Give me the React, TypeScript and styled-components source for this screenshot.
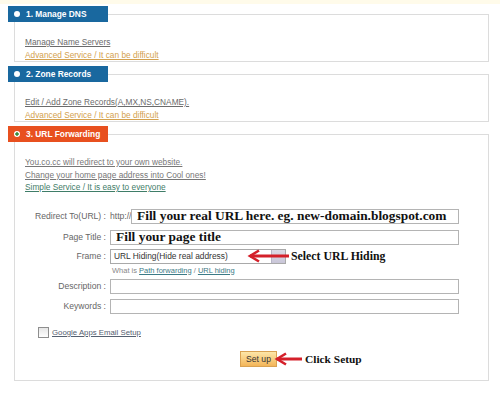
import React from 'react';
import styled, {createGlobalStyle} from 'styled-components';

const GlobalStyle = createGlobalStyle`
  body {
    margin: 0;
    background: #fff;
    font-family: 'Liberation Sans', Arial, sans-serif;
  }
`;

type Tone = 'blue' | 'orange';

const tabColors: Record<Tone, string> = {
  blue: '#19689f',
  orange: '#e8501f',
};

const Arrow = ({width}: {width: number}) => (
  <svg width={width} height={14} viewBox={`0 0 ${width} 14`}>
    <path d={`M3 7 L${width} 7`} stroke="#d4202a" strokeWidth={3} />
    <path d="M12 1.5 L3 7 L12 12.5" fill="none" stroke="#d4202a" strokeWidth={2.6} />
  </svg>
);

const App = () => {
  return (
    <Page>
      <GlobalStyle />
      <TopStrip />

      <Section>
        <Tab $tone="blue">
          <Dot />
          1. Manage DNS
        </Tab>
        <Panel>
          <Line $color="#6b6b6b" $underline>Manage Name Servers</Line>
          <Line $color="#d3a14e" $underline>Advanced Service / It can be difficult</Line>
        </Panel>
      </Section>

      <Section>
        <Tab $tone="blue">
          <Dot />
          2. Zone Records
        </Tab>
        <Panel>
          <Line $color="#6b6b6b" $underline>Edit / Add Zone Records(A,MX,NS,CNAME).</Line>
          <Line $color="#d3a14e" $underline>Advanced Service / It can be difficult</Line>
        </Panel>
      </Section>

      <Section>
        <Tab $tone="orange">
          <Dot $active />
          3. URL Forwarding
        </Tab>
        <Panel $last>
          <Line $color="#777" $underline>You.co.cc will redirect to your own website.</Line>
          <Line $color="#777" $underline>Change your home page address into Cool ones!</Line>
          <Line $color="#3f7d68" $underline>Simple Service / It is easy to everyone</Line>

          <Form>
            <FormRow $after={6}>
              <Label>Redirect To(URL) :</Label>
              <Field>
                <Prefix>http://</Prefix>
                <TextInput readOnly value="Fill your real URL here. eg. new-domain.blogspot.com" />
              </Field>
            </FormRow>
            <FormRow $after={4}>
              <Label>Page Title :</Label>
              <Field>
                <TextInput readOnly value="Fill your page title" />
              </Field>
            </FormRow>
            <FormRow $after={1}>
              <Label>Frame :</Label>
              <Field>
                <SelectBox>
                  <SelectText>URL Hiding(Hide real address)</SelectText>
                  <DropButton />
                  <SelectPointer>
                    <Arrow width={42} />
                  </SelectPointer>
                </SelectBox>
                <Note>Select URL Hiding</Note>
              </Field>
            </FormRow>
            <HintRow>
              <span />
              <Hint>
                What is <HintLink>Path forwarding</HintLink> / <HintLink>URL hiding</HintLink>
              </Hint>
            </HintRow>
            <FormRow $after={5}>
              <Label>Description :</Label>
              <Field>
                <TextInput readOnly value="" />
              </Field>
            </FormRow>
            <FormRow $after={0}>
              <Label>Keywords :</Label>
              <Field>
                <TextInput readOnly value="" />
              </Field>
            </FormRow>
          </Form>

          <CheckRow>
            <CheckBox />
            <CheckLabel>Google Apps Email Setup</CheckLabel>
          </CheckRow>

          <ButtonRow>
            <SetupButton>Set up</SetupButton>
            <InlineArrow>
              <Arrow width={28} />
            </InlineArrow>
            <Note $tight>Click Setup</Note>
          </ButtonRow>
        </Panel>
      </Section>
    </Page>
  );
};

export default App;

const Page = styled.div`
  width: 500px;
  height: 394px;
  overflow: hidden;
  background: #fff;
`;

const TopStrip = styled.div`
  height: 4px;
  background: #fffbea;
  margin-bottom: -2px;
`;

const Section = styled.div`
  display: flex;
  flex-direction: column;
  margin-top: 4px;
`;

const Tab = styled.div<{$tone: Tone}>`
  position: relative;
  z-index: 1;
  width: 100px;
  height: 16px;
  margin-left: 8px;
  box-sizing: border-box;
  padding-left: 6px;
  display: flex;
  align-items: center;
  gap: 6px;
  background: ${p => tabColors[p.$tone]};
  color: #fff;
  font-size: 8.4px;
  font-weight: bold;
`;

const Dot = styled.span<{$active?: boolean}>`
  width: 6px;
  height: 6px;
  border-radius: 50%;
  background: ${p =>
    p.$active ? 'radial-gradient(circle, #3b8a3a 0 1.5px, #fff 1.8px)' : '#fff'};
`;

const Panel = styled.div<{$last?: boolean}>`
  margin: -8px 11px 0 14px;
  border: 1px solid #dcdcdc;
  background: #fff;
  padding: 21px 10px ${p => (p.$last ? '13px' : '0')};
`;

const Line = styled.div<{$color: string; $underline?: boolean}>`
  font-size: 8.3px;
  line-height: 12.5px;
  color: ${p => p.$color};
  text-decoration: ${p => (p.$underline ? 'underline' : 'none')};
`;

const Form = styled.div`
  margin-top: 15px;
  display: flex;
  flex-direction: column;
`;

const FormRow = styled.div<{$after: number}>`
  display: grid;
  grid-template-columns: 81px 349px;
  column-gap: 4px;
  align-items: center;
  height: 15px;
  margin-bottom: ${p => p.$after}px;
`;

const Label = styled.div`
  font-size: 8.6px;
  color: #666;
  text-align: right;
`;

const Field = styled.div`
  display: flex;
  align-items: center;
  height: 15px;
`;

const Prefix = styled.span`
  width: 21px;
  flex: none;
  font-size: 8.6px;
  color: #666;
`;

const TextInput = styled.input`
  flex: 1;
  min-width: 0;
  height: 15px;
  box-sizing: border-box;
  margin: 0;
  padding: 0 5px;
  border: 1px solid #b4b4b4;
  outline: none;
  background: #fff;
  font-family: 'Liberation Serif', 'Times New Roman', serif;
  font-weight: bold;
  font-size: 13.4px;
  color: #111;
`;

const SelectBox = styled.div`
  position: relative;
  width: 176px;
  height: 15px;
  box-sizing: border-box;
  border: 1px solid #a9a9a9;
  display: flex;
  align-items: center;
  justify-content: space-between;
  background: #fff;
`;

const SelectText = styled.span`
  padding-left: 3px;
  font-size: 8.4px;
  color: #333;
`;

const DropButton = styled.span`
  width: 14px;
  height: 13px;
  box-sizing: border-box;
  border-left: 1px solid #b8b6c8;
  background: linear-gradient(#dcdae6, #c9c6d8);
`;

const SelectPointer = styled.span`
  position: absolute;
  left: 136px;
  top: -1px;
  display: flex;
`;

const InlineArrow = styled.span`
  display: flex;
  margin-left: -3px;
`;

const Note = styled.span<{$tight?: boolean}>`
  margin-left: ${p => (p.$tight ? '3px' : '5px')};
  font-family: 'Liberation Serif', 'Times New Roman', serif;
  font-weight: bold;
  font-size: ${p => (p.$tight ? '11.4px' : '11.8px')};
  color: #111;
  white-space: nowrap;
`;

const HintRow = styled.div`
  display: grid;
  grid-template-columns: 81px 349px;
  column-gap: 4px;
  height: 11px;
  margin-bottom: 3px;
  align-items: center;
`;

const Hint = styled.div`
  padding-left: 2px;
  font-size: 7.5px;
  color: #888;
`;

const HintLink = styled.span`
  color: #3b7a86;
  text-decoration: underline;
`;

const CheckRow = styled.div`
  display: flex;
  align-items: center;
  gap: 3px;
  margin-top: 13px;
  padding-left: 13px;
  height: 12px;
`;

const CheckBox = styled.span`
  width: 11px;
  height: 11px;
  box-sizing: border-box;
  border: 1px solid #8e8e8e;
  background: linear-gradient(#e6e6e6, #fff);
`;

const CheckLabel = styled.span`
  font-size: 7.8px;
  color: #556070;
  text-decoration: underline;
`;

const ButtonRow = styled.div`
  display: flex;
  align-items: center;
  margin-top: 12px;
  padding-left: 215px;
  height: 16px;
`;

const SetupButton = styled.button`
  width: 37px;
  height: 16px;
  box-sizing: border-box;
  margin: 0;
  padding: 0;
  border: 1px solid #d9a252;
  background: linear-gradient(#fde6a8, #f3b559);
  font-family: 'Liberation Sans', Arial, sans-serif;
  font-size: 8.6px;
  color: #333;
`;
